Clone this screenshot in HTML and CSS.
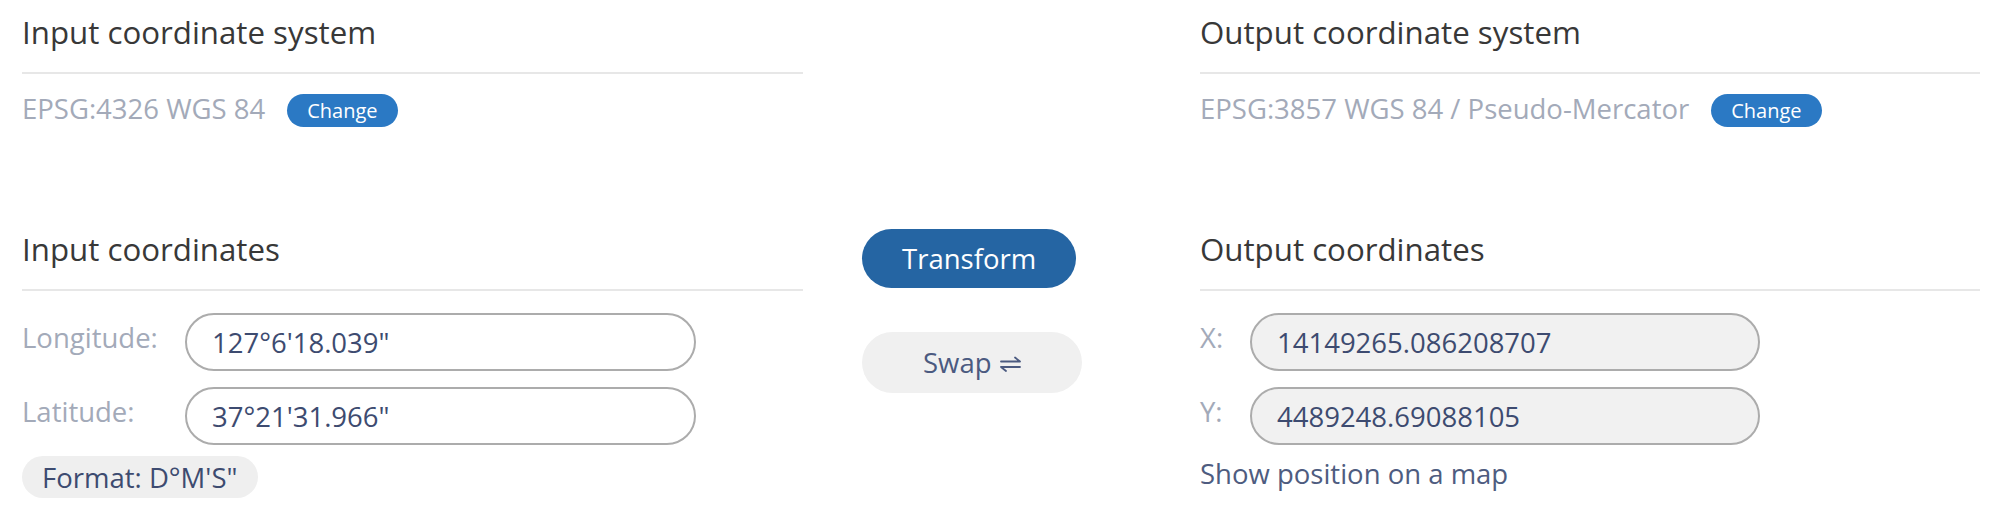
FILE: index.html
```html
<!DOCTYPE html>
<html lang="en">
<head>
    <meta charset="UTF-8">
    <title>Coordinate transformation</title>
    <link rel="stylesheet" href="styles.css">
</head>
<body>
    <div class="converter">

        <!-- Input side -->
        <section class="panel">
            <h2 class="title">Input coordinate system</h2>
            <div class="crs">
                <span class="crs-name">EPSG:4326 WGS 84</span>
                <button class="change">Change</button>
            </div>

            <h2 class="title title-coords">Input coordinates</h2>
            <div class="field">
                <label class="field-label">Longitude:</label>
                <input class="field-input" type="text" value="127°6'18.039&quot;">
            </div>
            <div class="field">
                <label class="field-label">Latitude:</label>
                <input class="field-input" type="text" value="37°21'31.966&quot;">
            </div>
            <button class="format">Format: D°M'S"</button>
        </section>

        <!-- Actions -->
        <div class="actions">
            <button class="transform">Transform</button>
            <button class="swap">Swap
                <svg class="swap-icon" width="23" height="16" viewBox="0 0 23 16" fill="none" stroke="currentColor" stroke-width="1.8" stroke-linecap="round">
                    <path d="M2 5.5h19M21 5.5l-5-4"/>
                    <path d="M21 11h-19M2 11l5 4"/>
                </svg>
            </button>
        </div>

        <!-- Output side -->
        <section class="panel">
            <h2 class="title">Output coordinate system</h2>
            <div class="crs">
                <span class="crs-name">EPSG:3857 WGS 84 / Pseudo-Mercator</span>
                <button class="change">Change</button>
            </div>

            <h2 class="title title-coords">Output coordinates</h2>
            <div class="field field-out">
                <label class="field-label">X:</label>
                <input class="field-input" type="text" value="14149265.086208707" readonly>
            </div>
            <div class="field field-out">
                <label class="field-label">Y:</label>
                <input class="field-input" type="text" value="4489248.69088105" readonly>
            </div>
            <a class="map-link" href="#">Show position on a map</a>
        </section>

    </div>
</body>
</html>
```

FILE: styles.css
```css
* {
    margin: 0;
    padding: 0;
    box-sizing: border-box;
    font-family: 'Open Sans', 'Liberation Sans', sans-serif;
}

body {
    background: #fff;
    color: #333;
    padding: 14px 20px 0 22px;
}

.converter {
    display: grid;
    grid-template-columns: 781px 397px 780px;
}

.title {
    font-size: 31.25px;
    font-weight: 400;
    line-height: 37.5px;
    color: #383838;
    padding-bottom: 20.5px;
    border-bottom: 2px solid #e7e7e7;
}

.title-coords {
    margin-top: 104px;
}

.crs {
    display: flex;
    align-items: center;
    height: 33px;
    margin-top: 20px;
    gap: 22px;
}

.crs-name {
    font-size: 27.5px;
    color: #a3aab9;
    position: relative;
    top: -2px;
}

.change {
    height: 33px;
    padding: 0 20px;
    border: none;
    border-radius: 17px;
    background: #2b79c4;
    color: #fff;
    font-size: 20px;
    cursor: pointer;
}

.field {
    display: flex;
    align-items: flex-start;
    margin-top: 22px;
}

.field + .field {
    margin-top: 16px;
}

.field-label {
    width: 163px;
    padding-top: 6px;
    font-size: 27.5px;
    color: #a3aab9;
}

.field-out .field-label {
    width: 50px;
}

.field-input {
    width: 511px;
    height: 58px;
    padding: 0 25px;
    border: 2px solid #acacac;
    border-radius: 29px;
    font-size: 27.5px;
    color: #3d4b70;
    background: #fff;
    outline: none;
}

.field-out .field-input {
    width: 510px;
    background: #f1f1f1;
}

.format {
    margin-top: 11px;
    height: 42px;
    padding: 0 21px 0 20px;
    border: none;
    border-radius: 21px;
    background: #efefef;
    color: #3d4b70;
    font-size: 27.5px;
}

.map-link {
    display: block;
    margin-top: 10px;
    font-size: 27.5px;
    color: #4e5c80;
    text-decoration: none;
}

.actions {
    display: flex;
    flex-direction: column;
    align-items: flex-start;
    gap: 44px;
    padding: 215px 0 0 59px;
}

.transform {
    height: 59px;
    padding: 0 40px;
    border: none;
    border-radius: 30px;
    background: #2565a3;
    color: #fff;
    font-size: 27.5px;
    cursor: pointer;
}

.swap {
    display: flex;
    align-items: center;
    gap: 7px;
    height: 61px;
    padding: 0 60px 0 61px;
    border: none;
    border-radius: 31px;
    background: #f0f0f0;
    color: #4b5a80;
    font-size: 27.5px;
    cursor: pointer;
}

.swap-icon {
    margin-top: 2px;
}
```
